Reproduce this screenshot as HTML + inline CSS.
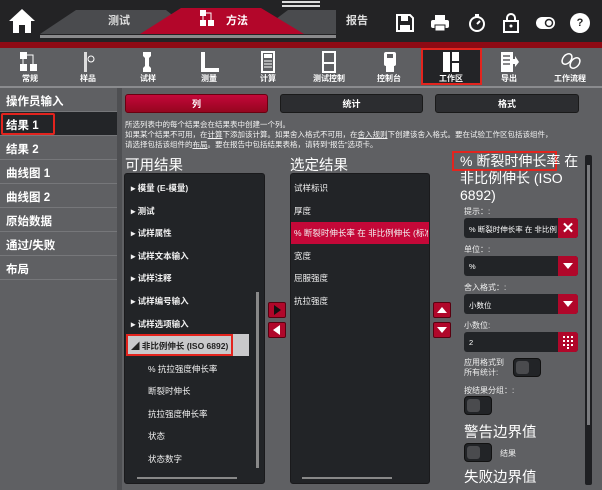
<!DOCTYPE html><html><head><meta charset="utf-8"><style>
*{box-sizing:border-box;margin:0;padding:0}
body{width:602px;height:490px;overflow:hidden;background:#5f6063;font-family:"Liberation Sans","Noto Sans CJK SC",sans-serif;color:#fff;position:relative}
.a{position:absolute}
.top{left:0;top:0;width:602px;height:42px;background:#232325}
.red{left:0;top:42px;width:602px;height:6px;background:#8e0a14}
.tb{left:0;top:48px;width:602px;height:38px;background:#5e5f62}
.tl{font-size:8px;font-weight:bold;text-align:center;width:60px;top:73px}
.side{left:0;top:88px;width:118px}
.si{height:24px;border-bottom:1px solid #76777a;font-size:11.5px;font-weight:bold;padding:5px 0 0 6px}
.btn{top:94px;height:19px;border-radius:3px;font-size:9px;font-weight:bold;text-align:center;line-height:19px;background:#2c2d30;border:1px solid #1a1a1a}
.box{background:#222427;border-radius:3px;border:1px solid #1a1a1c}
.li{position:absolute;font-size:8.5px;font-weight:bold;color:#f2f2f2}
.rb{width:18px;height:16px;background:#b0072a;border-radius:2px;border:1px solid #5a0010}
.lab{font-size:8px;color:#eee;left:464px}
.inp{left:464px;width:114px;height:20px;background:#222427;border-radius:3px;font-size:7.5px;padding:6px 0 0 5px}
.dd{position:absolute;right:0;top:0;width:20px;height:20px;background:#b0072a;border-radius:0 3px 3px 0}
.tg{width:28px;height:19px;background:#222427;border-radius:4px;border:1px solid #111}
.tg i{position:absolute;left:2px;top:2px;width:13px;height:13px;background:#4a4b4e;border-radius:3px}
.h{font-size:14.5px;color:#fff}
</style></head><body>
<div class="a top"></div>
<div class="a" style="left:282px;top:1px;width:38px;height:2px;background:#ddd"></div>
<div class="a" style="left:282px;top:5px;width:38px;height:2px;background:#ddd"></div>
<svg class="a" style="left:8px;top:8px" width="28" height="26" viewBox="0 0 28 26"><path d="M14 1 L27 13 L23 13 L23 25 L17 25 L17 17 L11 17 L11 25 L5 25 L5 13 L1 13 Z" fill="#fff"/></svg>
<svg class="a" style="left:36px;top:6px" width="300" height="32" viewBox="0 0 300 32">
<path d="M4 28 L40 4 L130 4 L160 28 Z" fill="#4a4b4e"/>
<path d="M220 28 L252 4 L300 4 L300 28 Z" fill="#4a4b4e"/>
<path d="M104 28 L145 2 L225 2 L268 28 Z" fill="#b3062a"/>
<rect x="4" y="29" width="296" height="3" fill="#8a8a8c"/>
</svg>
<div class="a" style="left:108px;top:12px;font-size:11px;font-weight:bold;color:#ddd">测试</div>
<div class="a" style="left:346px;top:12px;font-size:11px;font-weight:bold;color:#ddd">报告</div>
<svg class="a" style="left:199px;top:9px" width="16" height="18"><rect x="1" y="1" width="6" height="6" fill="#fff"/><rect x="1" y="11" width="6" height="6" fill="#fff"/><rect x="9" y="11" width="6" height="6" fill="#fff"/><path d="M4 7V11M7 4H12V11" stroke="#fff" fill="none"/></svg>
<div class="a" style="left:226px;top:12px;font-size:11px;font-weight:bold">方法</div>
<svg class="a" style="left:395px;top:13px" width="20" height="20"><path d="M2 2H15L18 5V18H2Z" fill="none" stroke="#fff" stroke-width="2"/><rect x="6" y="3" width="7" height="5" fill="#fff"/><rect x="5" y="12" width="10" height="5" fill="#fff"/></svg>
<svg class="a" style="left:430px;top:14px" width="20" height="18"><rect x="5" y="1" width="10" height="5" fill="#fff"/><rect x="1" y="6" width="18" height="8" rx="2" fill="#fff"/><rect x="5" y="11" width="10" height="6" fill="#fff" stroke="#232325"/></svg>
<svg class="a" style="left:467px;top:13px" width="20" height="20"><circle cx="10" cy="11" r="7" fill="none" stroke="#fff" stroke-width="2"/><rect x="8" y="1" width="4" height="3" fill="#fff"/><path d="M10 11L13 8" stroke="#fff" stroke-width="2"/></svg>
<svg class="a" style="left:502px;top:12px" width="18" height="22"><path d="M5 9V6A4 4 0 0 1 13 6V9" fill="none" stroke="#fff" stroke-width="2"/><rect x="2" y="9" width="14" height="11" fill="none" stroke="#fff" stroke-width="2"/><circle cx="9" cy="14" r="1.5" fill="#fff"/></svg>
<svg class="a" style="left:536px;top:16px" width="20" height="14"><path d="M6 13A6 6 0 0 1 6 1H13A6 6 0 0 1 13 13Z" fill="#fff"/><circle cx="13" cy="7" r="3.5" fill="none" stroke="#232325" stroke-width="1.5"/></svg>
<div class="a" style="left:570px;top:13px;width:20px;height:20px;border-radius:50%;background:#fff;color:#222;font-size:11px;font-weight:bold;text-align:center;line-height:20px">?</div>
<div class="a red"></div>
<div class="a tb"></div>
<div class="a" style="left:421px;top:48px;width:61px;height:37px;background:#232427;border:2px solid #e3241e"></div>
<svg class="a" style="left:19px;top:51px" width="20" height="22"><rect x="1" y="1" width="7" height="7" fill="#fff"/><rect x="1" y="13" width="7" height="7" fill="#fff"/><rect x="11" y="13" width="7" height="7" fill="#fff"/><path d="M4 8V13M8 4H14V13" stroke="#fff" fill="none"/></svg>
<svg class="a" style="left:81px;top:51px" width="14" height="22"><rect x="3" y="1" width="3" height="20" fill="#ddd"/><circle cx="10" cy="8" r="3" fill="none" stroke="#fff"/></svg>
<svg class="a" style="left:141px;top:51px" width="12" height="22"><path d="M2 1H10V5L8 7V15L10 17V21H2V17L4 15V7L2 5Z" fill="#fff"/></svg>
<svg class="a" style="left:200px;top:51px" width="20" height="22"><path d="M1 1H5V17H19V21H1Z" fill="#fff"/></svg>
<svg class="a" style="left:261px;top:51px" width="14" height="22"><rect x="1" y="1" width="12" height="20" fill="none" stroke="#fff" stroke-width="2"/><rect x="3" y="3" width="8" height="4" fill="#fff"/><path d="M3 10H11M3 13H11M3 16H11" stroke="#fff"/></svg>
<svg class="a" style="left:322px;top:51px" width="14" height="22"><rect x="1" y="1" width="12" height="20" fill="none" stroke="#fff" stroke-width="2"/><path d="M1 12H13" stroke="#fff" stroke-width="2"/></svg>
<svg class="a" style="left:383px;top:51px" width="14" height="22"><rect x="1" y="1" width="12" height="14" rx="2" fill="#fff"/><rect x="3" y="15" width="8" height="6" fill="#fff"/><rect x="4" y="3" width="6" height="4" fill="#5e5f62"/></svg>
<svg class="a" style="left:442px;top:51px" width="18" height="22"><rect x="1" y="1" width="7" height="20" fill="#fff"/><rect x="10" y="1" width="7" height="9" fill="#fff"/><rect x="10" y="12" width="7" height="9" fill="#fff"/></svg>
<svg class="a" style="left:500px;top:51px" width="20" height="22"><rect x="1" y="1" width="12" height="20" fill="#fff"/><path d="M3 5H10M3 9H10M3 13H10" stroke="#5e5f62" stroke-width="1.5"/><path d="M12 8H15V5L19 11L15 16V13H12Z" fill="#fff"/></svg>
<svg class="a" style="left:560px;top:51px" width="22" height="22"><ellipse cx="7" cy="8" rx="4" ry="6" fill="none" stroke="#fff" stroke-width="1.5" transform="rotate(40 7 8)"/><ellipse cx="15" cy="12" rx="4" ry="6" fill="none" stroke="#fff" stroke-width="1.5" transform="rotate(40 15 12)"/></svg>
<div class="a tl" style="left:0">常规</div><div class="a tl" style="left:58px">样品</div><div class="a tl" style="left:118px">试样</div><div class="a tl" style="left:179px">测量</div><div class="a tl" style="left:238px">计算</div><div class="a tl" style="left:299px">测试控制</div><div class="a tl" style="left:359px">控制台</div><div class="a tl" style="left:421px">工作区</div><div class="a tl" style="left:479px">导出</div><div class="a tl" style="left:540px">工作流程</div>
<div class="a" style="left:0;top:86px;width:602px;height:2px;background:#8a8b8e"></div>
<div class="a side">
<div class="si">操作员输入</div>
<div class="si" style="background:#232528;position:relative"><span style="position:absolute;left:1px;top:1px;width:54px;height:22px;border:2px solid #e3241e;border-radius:2px"></span>结果 1</div>
<div class="si">结果 2</div><div class="si">曲线图 1</div><div class="si">曲线图 2</div><div class="si">原始数据</div><div class="si">通过/失败</div><div class="si">布局</div>
</div>
<div class="a" style="left:117px;top:88px;width:5px;height:402px;background:#4e4f52"></div>
<div class="a btn" style="left:125px;width:143px;background:linear-gradient(#c4083a,#95051f);border-color:#6a0010">列</div>
<div class="a btn" style="left:280px;width:143px">统计</div>
<div class="a btn" style="left:435px;width:144px">格式</div>
<div class="a" style="left:125px;top:120px;font-size:7.5px;line-height:10px;color:#f2f2f2;width:470px">所选列表中的每个结果会在结果表中创建一个列。<br>如果某个结果不可用，在<u>计算</u>下添加该计算。如果舍入格式不可用，在<u>舍入规则</u>下创建该舍入格式。要在试验工作区包括该组件，<br>请选择包括该组件的<u>布局</u>。要在报告中包括结果表格，请转到“报告”选项卡。</div>
<div class="a h" style="left:125px;top:154px">可用结果</div>
<div class="a h" style="left:290px;top:154px">选定结果</div>
<div class="a box" style="left:124px;top:173px;width:141px;height:311px"></div>
<div class="li" style="left:131px;top:182px">▸ 模量 (E-模量)</div>
<div class="li" style="left:131px;top:205px">▸ 测试</div>
<div class="li" style="left:131px;top:227px">▸ 试样属性</div>
<div class="li" style="left:131px;top:250px">▸ 试样文本输入</div>
<div class="li" style="left:131px;top:272px">▸ 试样注释</div>
<div class="li" style="left:131px;top:295px">▸ 试样编号输入</div>
<div class="li" style="left:131px;top:318px">▸ 试样选项输入</div>
<div class="a" style="left:126px;top:334px;width:123px;height:22px;background:#c9c9cb"></div>
<div class="a" style="left:126px;top:334px;width:107px;height:22px;border:2px solid #e3241e"></div>
<div class="li" style="left:131px;top:340px;color:#222">◢ 非比例伸长 (ISO 6892)</div>
<div class="li" style="left:148px;top:363px;font-weight:normal">% 抗拉强度伸长率</div>
<div class="li" style="left:148px;top:385px;font-weight:normal">断裂时伸长</div>
<div class="li" style="left:148px;top:408px;font-weight:normal">抗拉强度伸长率</div>
<div class="li" style="left:148px;top:430px;font-weight:normal">状态</div>
<div class="li" style="left:148px;top:453px;font-weight:normal">状态数字</div>
<div class="a" style="left:256px;top:292px;width:3px;height:176px;background:#888"></div>
<div class="a" style="left:137px;top:477px;width:100px;height:2px;background:#888"></div>
<div class="a rb" style="left:268px;top:302px"><svg width="16" height="14"><path d="M5 2L12 7L5 12Z" fill="#111"/></svg></div>
<div class="a rb" style="left:268px;top:322px"><svg width="16" height="14"><path d="M11 2L4 7L11 12Z" fill="#fff"/></svg></div>
<div class="a box" style="left:290px;top:173px;width:140px;height:311px"></div>
<div class="li" style="left:294px;top:182px;font-weight:normal">试样标识</div>
<div class="li" style="left:294px;top:205px;font-weight:normal">厚度</div>
<div class="a" style="left:291px;top:222px;width:138px;height:22px;background:#c40838"></div>
<div class="li" style="left:294px;top:227px;font-weight:normal;white-space:nowrap;width:134px;overflow:hidden">% 断裂时伸长率 在 非比例伸长 (标准</div>
<div class="li" style="left:294px;top:250px;font-weight:normal">宽度</div>
<div class="li" style="left:294px;top:272px;font-weight:normal">屈服强度</div>
<div class="li" style="left:294px;top:295px;font-weight:normal">抗拉强度</div>
<div class="a" style="left:302px;top:477px;width:90px;height:2px;background:#888"></div>
<div class="a rb" style="left:433px;top:302px"><svg width="16" height="14"><path d="M3 10L8 4L13 10Z" fill="#fff"/></svg></div>
<div class="a rb" style="left:433px;top:322px"><svg width="16" height="14"><path d="M3 4L8 10L13 4Z" fill="#fff"/></svg></div>
<div class="a" style="left:452px;top:151px;width:105px;height:20px;border:2px solid #e3241e"></div>
<div class="a" style="left:460px;top:153px;width:125px;line-height:17px;font-size:14px">% 断裂时伸长率 在 非比例伸长 (ISO 6892)</div>
<div class="a lab" style="top:206px">提示：:</div>
<div class="a inp" style="top:218px">% 断裂时伸长率 在 非比例<div class="dd" style="display:flex;align-items:center;justify-content:center;font-size:15px;font-weight:bold">✕</div></div>
<div class="a lab" style="top:244px">单位：:</div>
<div class="a inp" style="top:256px">%<div class="dd"><svg width="20" height="20"><path d="M5 7L15 7L10 13Z" fill="#fff"/></svg></div></div>
<div class="a lab" style="top:282px">舍入格式：:</div>
<div class="a inp" style="top:294px">小数位<div class="dd"><svg width="20" height="20"><path d="M5 7L15 7L10 13Z" fill="#fff"/></svg></div></div>
<div class="a lab" style="top:320px">小数位:</div>
<div class="a inp" style="top:332px">2<div class="dd"><svg width="20" height="20"><g fill="#fff"><rect x="5" y="4" width="2" height="2"/><rect x="9" y="4" width="2" height="2"/><rect x="13" y="4" width="2" height="2"/><rect x="5" y="8" width="2" height="2"/><rect x="9" y="8" width="2" height="2"/><rect x="13" y="8" width="2" height="2"/><rect x="5" y="12" width="2" height="2"/><rect x="9" y="12" width="2" height="2"/><rect x="13" y="12" width="2" height="2"/><rect x="9" y="15" width="2" height="2"/></g></svg></div></div>
<div class="a lab" style="top:358px;line-height:10px">应用格式到<br>所有统计:</div>
<div class="a tg" style="left:513px;top:358px"><i></i></div>
<div class="a lab" style="top:385px">按结果分组：:</div>
<div class="a tg" style="left:464px;top:396px"><i></i></div>
<div class="a h" style="left:464px;top:421px">警告边界值</div>
<div class="a tg" style="left:464px;top:443px"><i></i></div>
<div class="a lab" style="left:500px;top:448px">结果</div>
<div class="a h" style="left:464px;top:466px">失败边界值</div>
<div class="a" style="left:585px;top:155px;width:7px;height:330px;background:#1e1f22;border-radius:2px"></div>
<div class="a" style="left:587px;top:165px;width:3px;height:260px;background:#7a7b7e"></div>
</body></html>
